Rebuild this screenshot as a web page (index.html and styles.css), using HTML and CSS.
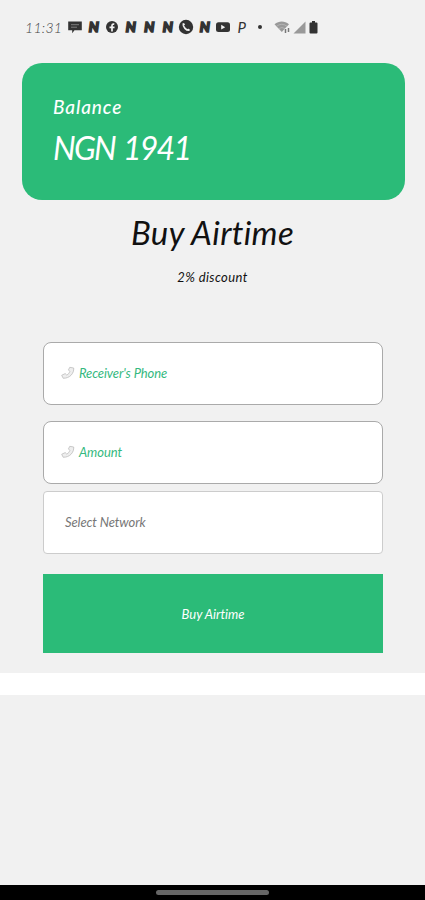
FILE: index.html
```
<!DOCTYPE html>
<html lang="en">
<head>
    <meta charset="UTF-8">
    <meta name="viewport" content="width=device-width, initial-scale=1.0">
    <title>Buy Airtime</title>
    <link rel="stylesheet" href="styles.css">
</head>
<body>

<svg class="defs">
    <symbol id="phone" viewBox="0 0 16 16">
        <path d="M10 1.500l4.500.8c.6 6-4.500 12-12 11.700L.8 10.600l4-1.900 1.700 1.600c2-.8 3-2.300 3.600-4.200L8.500 4.500z"/>
    </symbol>
</svg>

<div class="status-bar">
    <span class="time">11:31</span>
    <div class="notifications">
        <svg viewBox="0 0 14 14"><path d="M.2 1.500h13.600v8.700H6.500l-2.300 3v-3h-4z"/><path class="cut" d="M3 4.700h8M3 7.200h6"/></svg>
        <span class="n-logo">N</span>
        <svg viewBox="0 0 14 14"><circle cx="7" cy="7" r="6"/><path class="cut thick" d="M9.300 4.200C7.400 3.800 7 4.500 7 6v5.500M4.500 7.300h5"/></svg>
        <span class="n-logo">N</span>
        <span class="n-logo">N</span>
        <span class="n-logo">N</span>
        <svg class="call" viewBox="0 0 16 16"><circle cx="8" cy="8" r="7.200"/><path class="cut thick" d="M5.300 4.500c-.6 3.300 3 7.300 6.200 6.700M5.300 4.500l1 1.700M11.500 11.200l-1.900-1"/></svg>
        <span class="n-logo">N</span>
        <svg viewBox="0 0 14 14"><rect x="0" y="2.300" width="14" height="9.800" rx="2.500"/><path class="light" d="M5.200 4.800v4.800l4-2.400z"/></svg>
        <span class="p-logo">P</span>
        <i class="dot"></i>
    </div>
    <div class="signals">
        <svg class="wifi" viewBox="0 0 17 14"><path d="M.5 4.200C5 .6 10.500.6 15 4.200L7.800 12z"/><path class="arcs" d="M2.500 6.300q5.300-4 10.600 0M4.700 8.700q3.200-2.400 6.400 0"/><path class="arrows" d="M11.500 9v4M14.500 8v4"/></svg>
        <svg class="bars" viewBox="0 0 13 13"><path d="M12.500.5v12H.5z"/></svg>
        <svg class="battery" viewBox="0 0 9 13"><path d="M3 0h3v1.500h1.500q1 0 1 1v9q0 1-1 1h-6q-1 0-1-1v-9q0-1 1-1H3z"/></svg>
    </div>
</div>

<div class="balance-card">
    <p class="balance-label">Balance</p>
    <p class="balance-amount">NGN 1941</p>
</div>

<h1>Buy Airtime</h1>
<p class="discount">2% discount</p>

<div class="form">
    <div class="field">
        <svg><use href="#phone"/></svg>
        <span class="receiver">Receiver's Phone</span>
    </div>
    <div class="field">
        <svg><use href="#phone"/></svg>
        <span class="amount">Amount</span>
    </div>
    <div class="select"><span>Select Network</span></div>
    <button class="buy"><span>Buy Airtime</span></button>
</div>

<div class="divider"></div>

<div class="nav-bar"><div class="handle"></div></div>

</body>
</html>
```
FILE: styles.css
```
* {
    box-sizing: border-box;
}
body {
    margin: 0;
    height: 900px;
    display: flex;
    flex-direction: column;
    background-color: #f1f1f1;
    font-family: Lato, sans-serif;
    font-style: italic;
    font-variant-ligatures: none;
    color: #111;
    overflow: hidden;
}
p, h1 {
    margin: 0;
    white-space: nowrap;
}
.defs {
    display: none;
}
.status-bar {
    display: flex;
    align-items: center;
    height: 63px;
    padding: 0 0 9px 25px;
    color: #333;
    fill: #333;
}
.time {
    width: 41px;
    font-size: 14px;
    font-weight: 300;
    letter-spacing: 0.3px;
    color: #444;
}
.notifications {
    display: grid;
    grid-template-columns: repeat(11, 18.5px);
    place-items: center;
}
.notifications svg {
    width: 14px;
    height: 14px;
}
.notifications .call {
    width: 16px;
    height: 16px;
}
.cut {
    fill: none;
    stroke: #f1f1f1;
    stroke-width: 0.4;
}
.thick {
    stroke-width: 1.7;
}
.light {
    fill: #f1f1f1;
}
.n-logo {
    font-size: 14px;
    line-height: 14px;
    font-weight: 900;
    -webkit-text-stroke: 1.6px #333;
}
.p-logo {
    font-size: 15px;
    line-height: 15px;
    font-weight: 400;
}
.dot {
    width: 4px;
    height: 4px;
    border-radius: 50%;
    background-color: #333;
}
.signals {
    display: flex;
    align-items: center;
    gap: 2px;
    margin-left: 4px;
}
.wifi {
    width: 17px;
    height: 14px;
    fill: #999;
}
.arcs {
    fill: none;
    stroke: #ccc;
    stroke-width: 0.5;
}
.arrows {
    stroke: #777;
    stroke-width: 1.5;
}
.bars {
    width: 13px;
    height: 13px;
    fill: #999;
}
.battery {
    width: 9px;
    height: 13px;
    margin-left: 1px;
}
.balance-card {
    height: 137px;
    margin: 0 20px 0 22px;
    padding: 31px 31px 0;
    border-radius: 20px;
    background-color: #2bbb78;
    color: #fff;
}
.balance-label {
    font-size: 19px;
    line-height: 26px;
    font-weight: 500;
    letter-spacing: 0.9px;
}
.balance-amount {
    font-size: 32px;
    line-height: 56px;
    letter-spacing: -1.7px;
    word-spacing: 2px;
}
h1 {
    margin-top: 9px;
    font-size: 33px;
    line-height: 46px;
    font-weight: 400;
    letter-spacing: 0.3px;
    text-align: center;
}
.discount {
    margin-top: 12px;
    font-size: 13px;
    line-height: 20px;
    letter-spacing: 0.4px;
    text-align: center;
}
.form {
    margin: 55px 42px 0 43px;
}
.field {
    display: flex;
    align-items: center;
    height: 63px;
    margin-bottom: 16px;
    padding: 0 0 2px 17px;
    border: 1px solid #aaa;
    border-radius: 8px;
    background-color: #fff;
    font-size: 13px;
    letter-spacing: -0.1px;
    color: #35b980;
}
.field svg {
    width: 14px;
    height: 14px;
    margin-right: 4px;
    fill: #eee;
    stroke: #bbb;
    stroke-width: 0.9;
}
.field + .field {
    margin-bottom: 7px;
}
.select {
    display: flex;
    align-items: center;
    height: 63px;
    padding: 0 0 2px 21px;
    border: 1px solid #ccc;
    border-radius: 4px;
    background-color: #fff;
    font-size: 13px;
    letter-spacing: -0.1px;
    color: #777;
}
.buy {
    display: block;
    width: 100%;
    height: 79px;
    margin-top: 20px;
    padding: 0;
    border: none;
    background-color: #2bbb78;
    font: inherit;
    font-size: 13px;
    color: #fff;
}
.divider {
    height: 22px;
    margin-top: 20px;
    background-color: #fff;
}
.nav-bar {
    display: flex;
    justify-content: center;
    height: 15px;
    margin-top: auto;
    padding-top: 5px;
    background-color: #000;
}
.handle {
    width: 113px;
    height: 5px;
    border-radius: 3px;
    background-color: #666;
}
```
